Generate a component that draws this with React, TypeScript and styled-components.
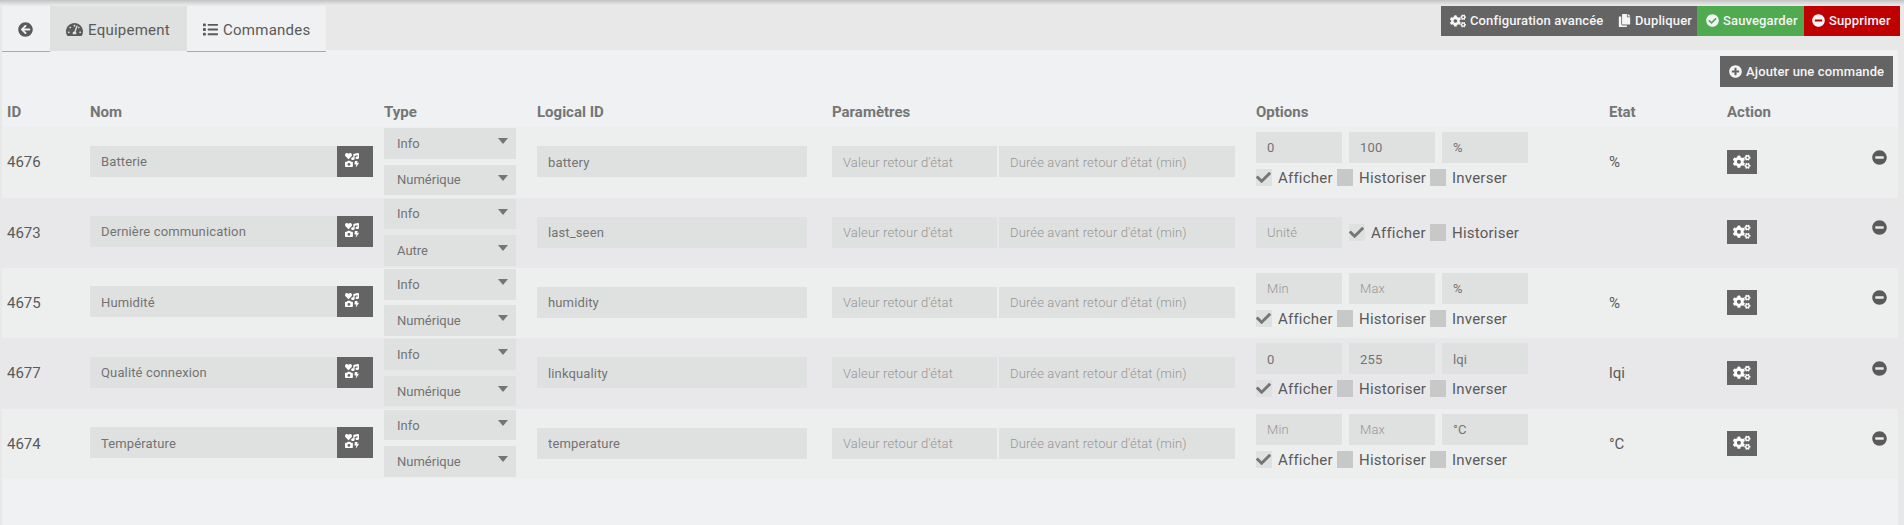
import React from "react";
import styled, { createGlobalStyle, css } from "styled-components";
import {
  FaArrowCircleLeft,
  FaCheck,
  FaCheckCircle,
  FaCogs,
  FaCopy,
  FaIcons,
  FaList,
  FaMinusCircle,
  FaPlusCircle,
  FaTachometerAlt,
} from "react-icons/fa";

const color = {
  page: "#e8e8e9",
  panel: "#eff1f3",
  rowOdd: "#edefee",
  rowEven: "#e8e8ea",
  field: "#dfe1e0",
  text: "#5a5a5a",
  fieldText: "#737373",
  heading: "#757575",
  hint: "#969696",
  dark: "#646464",
  success: "#50aa50",
  danger: "#be0000",
  accent: "#93c93c",
};

const GlobalStyle = createGlobalStyle`
  *, *::before, *::after { box-sizing: border-box; }
  body {
    margin: 0;
    background: ${color.page};
    color: ${color.text};
    font: 15px/20px Roboto, "Liberation Sans", sans-serif;
  }
  button, input, select { font-family: inherit; border: 0; border-radius: 0; margin: 0; }
  svg { display: block; flex: none; }
`;

const Page = styled.div`
  height: 525px;
  overflow: hidden;
  padding: 0 4px 0 2px;
  background: linear-gradient(#c3c3c4, ${color.page} 5px);
  display: flex;
  flex-direction: column;
`;

const TopBar = styled.header`
  display: flex;
  justify-content: space-between;
  align-items: flex-start;
  height: 50px;
  padding-top: 6px;
`;

const Tabs = styled.nav`
  display: flex;
  position: relative;
`;

const Tab = styled.a<{ $active?: boolean; $width: number }>`
  display: flex;
  align-items: center;
  gap: 5px;
  width: ${(p) => p.$width}px;
  height: 46px;
  padding: 2px 0 0 16px;
  letter-spacing: 0.25px;
  background: ${(p) => (p.$active ? color.field : color.panel)};
  border-bottom: 1px solid ${(p) => (p.$active ? color.panel : color.accent)};
`;

const Toolbar = styled.div`
  display: flex;
`;

const ToolButton = styled.button<{ $tone?: string; $width: number; $height?: number; $pad?: number }>`
  display: flex;
  align-items: center;
  gap: 4px;
  width: ${(p) => p.$width}px;
  height: ${(p) => p.$height ?? 30}px;
  padding: 0 0 ${(p) => (p.$height ? 0 : 1)}px ${(p) => p.$pad ?? 9}px;
  background: ${(p) => p.$tone ?? color.dark};
  color: #f5f5f5;
  font-size: 13px;
  font-weight: 500;
  letter-spacing: 0.13px;
  white-space: nowrap;
`;

const Panel = styled.main`
  flex: 1;
  width: 1896px;
  background: ${color.panel};
`;

const PanelActions = styled.div`
  display: flex;
  justify-content: flex-end;
  height: 45.2px;
  padding: 6px 5px 0 0;
`;

const columns = css`
  display: grid;
  grid-template-columns: 83px 294px 153px 295px 424px 353px 118px 1fr 26px;
  padding-left: 5px;
`;

const HeadRow = styled.div`
  ${columns}
  height: 32px;
  padding-top: 1.5px;
  align-items: center;
  font-weight: 700;
  color: ${color.heading};
`;

const Row = styled.div`
  ${columns}
  height: 70.4px;
  background: ${color.rowOdd};
  &:nth-child(odd) { background: ${color.rowEven}; }
`;

const Cell = styled.div<{ $top: number }>`
  display: flex;
  align-items: flex-start;
  padding-top: ${(p) => p.$top}px;
`;

const Stack = styled.div<{ $top: number; $gap: number }>`
  display: flex;
  flex-direction: column;
  gap: ${(p) => p.$gap}px;
  padding-top: ${(p) => p.$top}px;
`;

const Line = styled.div<{ $gap?: number; $top?: number }>`
  display: flex;
  align-items: center;
  gap: ${(p) => p.$gap ?? 0}px;
  padding-top: ${(p) => p.$top ?? 0}px;
`;

const Field = styled.input<{ $width: number }>`
  width: ${(p) => p.$width}px;
  height: 31px;
  padding: 1px 11px 0;
  background: ${color.field};
  color: ${color.fieldText};
  font-size: 13px;
  letter-spacing: 0.14px;
  outline: 0;
  &::placeholder { color: ${color.hint}; font-weight: 300; opacity: 1; }
`;

const IconPicker = styled.button`
  width: 36px;
  height: 31px;
  padding: 7px 0 0 8px;
  display: flex;
  align-items: flex-start;
  background: ${color.dark};
  color: #fff;
`;

const SelectBox = styled.div`
  position: relative;
  width: 132px;
  height: 30.6px;
  background: ${color.field};
  &::after {
    content: "";
    position: absolute;
    right: 8px;
    top: 10px;
    border: 5.5px solid transparent;
    border-top: 6px solid ${color.heading};
    border-bottom: 0;
    pointer-events: none;
  }
`;

const Select = styled.select`
  appearance: none;
  width: 100%;
  height: 100%;
  padding: 0 13px;
  background: transparent;
  color: ${color.fieldText};
  font-size: 13px;
  outline: 0;
`;

const Option = styled.label<{ $width: number }>`
  display: flex;
  align-items: center;
  gap: 6px;
  width: ${(p) => p.$width}px;
  height: 20px;
  letter-spacing: 0.22px;
  white-space: nowrap;
`;

const Box = styled.span<{ $on?: boolean }>`
  display: flex;
  align-items: center;
  width: 16px;
  height: 17px;
  flex: none;
  margin-top: -1px;
  background: ${(p) => (p.$on ? color.field : "#c8c8c8")};
  color: ${color.heading};
`;

const ConfigButton = styled.button`
  display: flex;
  align-items: flex-start;
  justify-content: center;
  width: 30px;
  height: 24.4px;
  padding: 3px 0 0;
  background: ${color.dark};
  color: #fff;
`;

type Command = {
  id: number;
  name: string;
  logicalId: string;
  subtype: string;
  numeric: boolean;
  min?: string;
  max?: string;
  unit?: string;
  state?: string;
};

const commands: Command[] = [
  { id: 4676, name: "Batterie", logicalId: "battery", subtype: "Numérique", numeric: true, min: "0", max: "100", unit: "%", state: "%" },
  { id: 4673, name: "Dernière communication", logicalId: "last_seen", subtype: "Autre", numeric: false },
  { id: 4675, name: "Humidité", logicalId: "humidity", subtype: "Numérique", numeric: true, unit: "%", state: "%" },
  { id: 4677, name: "Qualité connexion", logicalId: "linkquality", subtype: "Numérique", numeric: true, min: "0", max: "255", unit: "lqi", state: "lqi" },
  { id: 4674, name: "Température", logicalId: "temperature", subtype: "Numérique", numeric: true, unit: "°C", state: "°C" },
];

function CheckOption({ label, width, checked }: { label: string; width: number; checked?: boolean }) {
  return (
    <Option $width={width}>
      <Box $on={checked}>{checked && <FaCheck size={15} />}</Box>
      {label}
    </Option>
  );
}

function Dropdown({ value }: { value: string }) {
  return (
    <SelectBox>
      <Select defaultValue={value}>
        <option>{value}</option>
      </Select>
    </SelectBox>
  );
}

function CommandRow({ c }: { c: Command }) {
  return (
    <Row>
      <Cell $top={25}>{c.id}</Cell>
      <Cell $top={18.4}>
        <Field $width={247} defaultValue={c.name} />
        <IconPicker><FaIcons size={14} /></IconPicker>
      </Cell>
      <Stack $top={1} $gap={5.8}>
        <Dropdown value="Info" />
        <Dropdown value={c.subtype} />
      </Stack>
      <Cell $top={19}>
        <Field $width={270} defaultValue={c.logicalId} />
      </Cell>
      <Cell $top={19}>
        <Line $gap={2}>
          <Field $width={165} placeholder="Valeur retour d'état" />
          <Field $width={236} placeholder="Durée avant retour d'état (min)" />
        </Line>
      </Cell>
      {c.numeric ? (
        <Stack $top={4.8} $gap={5}>
          <Line $gap={7}>
            <Field $width={86} defaultValue={c.min} placeholder="Min" />
            <Field $width={86} defaultValue={c.max} placeholder="Max" />
            <Field $width={86} defaultValue={c.unit} placeholder="Unité" />
          </Line>
          <Line>
            <CheckOption label="Afficher" width={81} checked />
            <CheckOption label="Historiser" width={93} />
            <CheckOption label="Inverser" width={80} />
          </Line>
        </Stack>
      ) : (
        <Cell $top={19}>
          <Line $gap={7}>
            <Field $width={86} placeholder="Unité" />
            <Line $top={2}>
              <CheckOption label="Afficher" width={81} checked />
              <CheckOption label="Historiser" width={93} />
            </Line>
          </Line>
        </Cell>
      )}
      <Cell $top={25}>{c.state}</Cell>
      <Cell $top={22.4}>
        <ConfigButton><FaCogs size={17.5} /></ConfigButton>
      </Cell>
      <Cell $top={22.4}>
        <FaMinusCircle size={15} />
      </Cell>
    </Row>
  );
}

export default function App() {
  return (
    <>
      <GlobalStyle />
      <Page>
        <TopBar>
          <Tabs>
            <Tab $width={48}><FaArrowCircleLeft size={15} /></Tab>
            <Tab $width={137} $active><FaTachometerAlt size={17} />Equipement</Tab>
            <Tab $width={139}><FaList size={15} />Commandes</Tab>
          </Tabs>
          <Toolbar>
            <ToolButton $width={167}><FaCogs size={16} />Configuration avancée</ToolButton>
            <ToolButton $width={89} $pad={10}><FaCopy size={13} />Dupliquer</ToolButton>
            <ToolButton $width={107} $tone={color.success}><FaCheckCircle size={13} />Sauvegarder</ToolButton>
            <ToolButton $width={96} $pad={8} $tone={color.danger}><FaMinusCircle size={13} />Supprimer</ToolButton>
          </Toolbar>
        </TopBar>
        <Panel>
          <PanelActions>
            <ToolButton $width={173} $height={31}><FaPlusCircle size={13} />Ajouter une commande</ToolButton>
          </PanelActions>
          <div>
            <HeadRow>
              <span>ID</span>
              <span>Nom</span>
              <span>Type</span>
              <span>Logical ID</span>
              <span>Paramètres</span>
              <span>Options</span>
              <span>Etat</span>
              <span>Action</span>
            </HeadRow>
            {commands.map((c) => (
              <CommandRow key={c.id} c={c} />
            ))}
          </div>
        </Panel>
      </Page>
    </>
  );
}
